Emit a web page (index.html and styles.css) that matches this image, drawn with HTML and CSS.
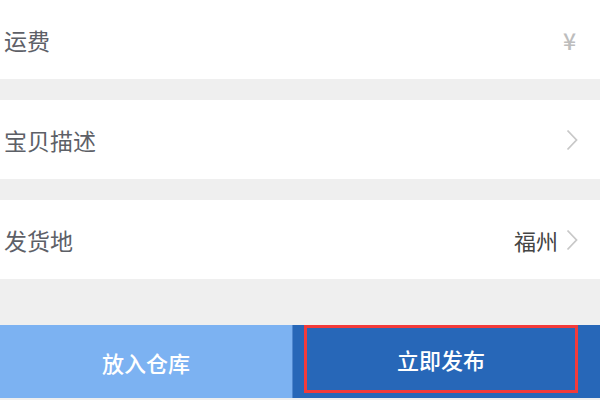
FILE: index.html
```html
<!DOCTYPE html>
<html lang="zh-CN">
<head>
  <meta charset="UTF-8" />
  <title>发布宝贝</title>
  <link rel="stylesheet" href="styles.css">
</head>
<body>
  <main class="form">
    <div class="row">
      <span class="label">运费</span>
      <span class="value yen">¥</span>
    </div>
    <div class="row">
      <span class="label">宝贝描述</span>
      <span class="value"><svg class="chev" viewBox="0 0 12 22"><path d="M1.5 1.5 L10.5 11 L1.5 20.5" /></svg></span>
    </div>
    <div class="row">
      <span class="label">发货地</span>
      <span class="value">福州<svg class="chev" viewBox="0 0 12 22"><path d="M1.5 1.5 L10.5 11 L1.5 20.5" /></svg></span>
    </div>
  </main>
  <footer class="actions">
    <button type="button" class="btn store">放入仓库</button>
    <div class="publish-wrap">
      <button type="button" class="btn publish">立即发布</button>
    </div>
  </footer>
</body>
</html>
```

FILE: styles.css
```css
*,*::before,*::after{box-sizing:border-box;margin:0;padding:0}
html,body{width:600px;height:400px;overflow:hidden}
body{font-family:"Noto Sans CJK SC","Noto Sans",sans-serif;background:#efefef;display:flex;flex-direction:column}

.form{display:flex;flex-direction:column;gap:21px;height:325px}
.row{height:79px;background:#fff;display:flex;align-items:center;justify-content:space-between;padding:0 22px 0 4px}
.label{font-size:23px;color:#5d6067}
.value{display:flex;align-items:center;gap:8px;font-size:22px;color:#444}
.yen{color:#bdbdbd;font-size:23px;font-weight:500;margin-right:2px}
.chev{width:12px;height:22px;fill:none;stroke:#c8c8c8;stroke-width:1.8}

.actions{display:flex;height:73px}
.btn{border:none;font-family:inherit;font-size:22px;font-weight:500;color:#fff;cursor:pointer}
.store{width:293px;background:#7cb2f2;border-right:1px solid #4f87cf}
.publish-wrap{flex:1;background:#2767b8;padding:0 22px 5px 11px}
.publish{width:100%;height:100%;background:#2767b8;border:3px solid #f23a3a}
```
